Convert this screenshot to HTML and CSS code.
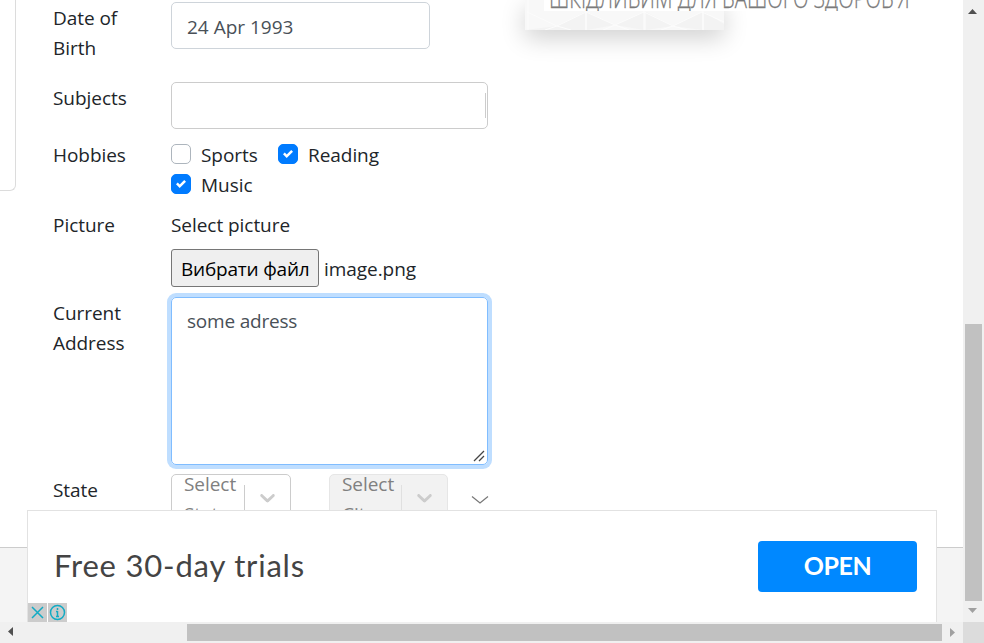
FILE: index.html
```html
<!DOCTYPE html>
<html lang="uk">
<head>
<meta charset="utf-8">
<title>Student Registration Form</title>
<link rel="stylesheet" href="styles.css">
</head>
<body>
<div class="window">
  <div class="viewport">
    <div class="content">
      <aside class="side-panel"></aside>
      <main class="form">
        <div class="label dob-label">Date of<br>Birth</div>
        <div class="field dob">24 Apr 1993</div>

        <div class="label subjects-label">Subjects</div>
        <div class="field subjects"><i class="caret"></i></div>

        <div class="label">Hobbies</div>
        <div class="hobbies">
          <div class="checks">
            <span class="check"></span><span class="sports">Sports</span>
            <span class="check on"><svg viewBox="0 0 8 8"><path d="M6.564.75l-3.59 3.612-1.538-1.55L0 4.26l2.974 2.99L8 2.193z"/></svg></span><span>Reading</span>
          </div>
          <div class="checks">
            <span class="check on"><svg viewBox="0 0 8 8"><path d="M6.564.75l-3.59 3.612-1.538-1.55L0 4.26l2.974 2.99L8 2.193z"/></svg></span><span>Music</span>
          </div>
        </div>

        <div class="label">Picture</div>
        <div class="picture">
          <div>Select picture</div>
          <div class="file"><span class="file-button">Вибрати файл</span><span class="file-name">image.png</span></div>
        </div>

        <div class="label address-label">Current<br>Address</div>
        <div class="textarea">some adress
          <svg class="grip" viewBox="0 0 12 12"><path d="M1 11L11 1M6 11l5-5"/></svg>
        </div>

        <div class="label state-label">State</div>
        <div class="selects">
          <div class="select"><div class="placeholder">Select<br>State</div><i class="separator"></i><svg class="chevron" viewBox="0 0 20 20"><path d="M4.516 7.548c0.436-0.446 1.043-0.481 1.576 0l3.908 3.747 3.908-3.747c0.533-0.481 1.141-0.446 1.574 0 0.436 0.445 0.408 1.197 0 1.615-0.406 0.418-4.695 4.502-4.695 4.502-0.217 0.223-0.502 0.335-0.787 0.335s-0.57-0.112-0.789-0.335c0 0-4.287-4.084-4.695-4.502s-0.436-1.17 0-1.615z"/></svg></div>
          <div class="select disabled"><div class="placeholder">Select<br>City</div><i class="separator"></i><svg class="chevron" viewBox="0 0 20 20"><path d="M4.516 7.548c0.436-0.446 1.043-0.481 1.576 0l3.908 3.747 3.908-3.747c0.533-0.481 1.141-0.446 1.574 0 0.436 0.445 0.408 1.197 0 1.615-0.406 0.418-4.695 4.502-4.695 4.502-0.217 0.223-0.502 0.335-0.787 0.335s-0.57-0.112-0.789-0.335c0 0-4.287-4.084-4.695-4.502s-0.436-1.17 0-1.615z"/></svg></div>
          <svg class="collapse" viewBox="0 0 18 10"><path d="M1 1.5l8 6.5 8-6.5"/></svg>
        </div>
      </main>
      <section class="promo">
        <div class="promo-image">
          <svg viewBox="0 0 199 30"><g fill="#f3f3f3"><path d="M0 30L32 26 60 12V30zM62 12v18l28-5zM90 25l29-13v18zM121 12v18l27-4zM148 26l29-14v18zM179 12l20 12v6h-20z"/></g><path d="M2 12l30 14 29-14 29 13 29-13 29 14 29-14 22 10M3 0v30M61 10v20M119 10v20M178 10v20M20 30l12-4 14 4M78 30l12-5 14 5M136 30l12-4 14 4" fill="none" stroke="#fcfcfc"/></svg>
        </div>
        <div class="promo-text"><span>ШКІДЛИВИМ ДЛЯ ВАШОГО ЗДОРОВ'Я</span></div>
      </section>
    </div>
    <footer class="footer"></footer>
    <div class="banner">
      <span class="banner-title">Free 30-day trials</span>
      <span class="open">OPEN</span>
      <div class="badges">
        <svg viewBox="0 0 19 19"><path d="M4 4l11 11M15 4L4 15"/></svg>
        <svg viewBox="0 0 19 19"><circle cx="9.5" cy="9.5" r="7"/><path d="M9.5 8v6M9.5 5v2M8 8.5h1.5M8 13.5h3"/></svg>
      </div>
    </div>
  </div>
  <div class="vbar">
    <svg class="up" viewBox="0 0 9 5"><path d="M0 5L4.5 0 9 5z"/></svg>
    <i class="vthumb"></i>
    <svg class="down" viewBox="0 0 9 5"><path d="M0 0h9L4.5 5z"/></svg>
  </div>
  <div class="hbar">
    <svg class="left" viewBox="0 0 5 9"><path d="M5 0v9L0 4.5z"/></svg>
    <i class="hthumb"></i>
    <svg class="right" viewBox="0 0 5 9"><path d="M0 0v9l5-4.5z"/></svg>
  </div>
  <div class="corner"></div>
</div>
</body>
</html>
```
FILE: styles.css
```css
* { box-sizing: border-box; }
body { margin: 0; background: #fff; color: #212529; font: 19px/30px "Open Sans", "Noto Sans", sans-serif; letter-spacing: -.05px; overflow: hidden; }
svg { display: block; }
i { display: block; }
.window { display: grid; grid-template: 622px 21px / 963px 21px; width: 984px; height: 643px; overflow: hidden; }
.viewport { position: relative; overflow: hidden; display: flex; flex-direction: column; }
.content { height: 547px; display: flex; align-items: flex-start; }
.side-panel { width: 16px; height: 191px; border: solid #dcdcdc; border-width: 0 1px 1px 0; border-bottom-right-radius: 6px; }
.form { width: 472px; margin-left: 37px; display: grid; grid-template-columns: 118px 1fr; grid-template-rows: 82px 58px 70px 87px 177px 73px; align-items: start; white-space: nowrap; }
.dob-label { padding-top: 3px; }
.subjects-label, .address-label, .state-label { padding-top: 1px; }
.field { height: 47px; border: 1px solid #ced4da; border-radius: 5px; color: #495057; }
.dob { width: 259px; margin-top: 2px; padding: 9px 15px; letter-spacing: 0; }
.subjects { width: 317px; border-color: #ccc; display: flex; justify-content: flex-end; padding: 10px 1px; }
.caret { width: 1px; height: 25px; background: #ccc; }
.checks { display: flex; height: 30px; }
.check { width: 20px; height: 20px; margin: 4px 10px 0 0; border: 1px solid #adb5bd; border-radius: 5px; display: grid; place-items: center; }
.on { background: #007bff; border-color: #007bff; }
.on svg { width: 10px; height: 10px; fill: #fff; }
.sports { width: 77px; }
.file { display: flex; margin-top: 9px; height: 38px; align-items: center; }
.file-name { padding-top: 2px; }
.file-button { width: 148px; height: 38px; margin-right: 5px; border: 1px solid #767676; border-radius: 3px; background: #efefef; color: #000; padding: 4px 9px; letter-spacing: -.2px; }
.textarea { position: relative; width: 317px; height: 168px; border: 1px solid #80bdff; border-radius: 5px; box-shadow: 0 0 0 4px #bfdeff; padding: 8px 15px; color: #495057; letter-spacing: -.2px; }
.grip { position: absolute; right: 2px; bottom: 2px; width: 12px; height: 12px; fill: none; stroke: #444; stroke-width: 1.3; }
.selects { display: flex; align-items: flex-start; }
.select { width: 120px; height: 47px; margin-right: 38px; border: 1px solid #ccc; border-radius: 5px; display: flex; overflow: hidden; color: #808080; }
.placeholder { width: 72px; margin-top: -6px; padding-left: 12px; }
.separator { width: 1px; height: 40px; margin-top: 10px; background: #ccc; }
.chevron { width: 25px; height: 25px; margin: 10px 0 0 10px; fill: #ccc; }
.disabled { width: 119px; margin-right: 23px; background: #f2f2f2; border-color: #e6e6e6; }
.disabled .placeholder { width: 71px; }
.disabled .separator { background: #e0e0e0; }
.collapse { width: 18px; height: 10px; margin-top: 21px; fill: none; stroke: #777; stroke-width: 1.2; }
.promo { width: 438px; position: relative; }
.promo-image { width: 199px; height: 30px; background: #f8f8f8; box-shadow: 0 8px 24px rgba(0,0,0,.19); }
.promo-text { position: absolute; left: 19px; top: 0; width: 386px; height: 11px; background: #fff; overflow: hidden; color: #777; padding-left: 5px; }
.promo-text span { display: block; font: 300 28px/30px "Open Sans", sans-serif; -webkit-text-stroke: .3px #888; margin-top: -18px; letter-spacing: 0; white-space: nowrap; transform: scaleX(.723); transform-origin: 0 0; }
.footer { flex: 1; background: #f4f4f4; border-top: 1px solid #ccc; }
.banner { position: absolute; left: 27px; top: 510px; width: 910px; height: 112px; background: #fff; border: 1px solid #e2e2e2; border-bottom: 0; display: flex; align-items: flex-start; justify-content: space-between; padding: 30px 19px 0 26px; }
.banner-title { font: 31px/48px Lato, sans-serif; letter-spacing: .8px; color: #444; }
.open { width: 159px; height: 51px; border-radius: 4px; background: #0088ff; color: #fff; font: bold 25px/48px Lato, sans-serif; letter-spacing: -.4px; text-align: center; }
.badges { position: absolute; left: 0; bottom: 0; display: flex; gap: 1px; }
.badges svg { width: 19px; height: 19px; background: #ccc; fill: none; stroke: #12abc4; stroke-width: 1.5; }
.vbar { background: #f0f0f0; display: flex; flex-direction: column; align-items: center; padding-right: 2px; }
.up { width: 9px; height: 5px; margin-top: 9px; fill: #505050; }
.vthumb { width: 17px; height: 277px; margin: 310px 0 7px 2px; background: #c1c1c1; }
.down { width: 9px; height: 5px; fill: #a0a0a0; }
.hbar { background: #f0f0f0; display: flex; align-items: center; }
.left { width: 5px; height: 9px; margin: 0 0 2px 8px; fill: #505050; }
.hthumb { width: 755px; height: 17px; margin: 0 8px 0 174px; background: #c1c1c1; }
.right { width: 5px; height: 9px; fill: #a0a0a0; }
.corner { background: #dcdcdc; }
```
